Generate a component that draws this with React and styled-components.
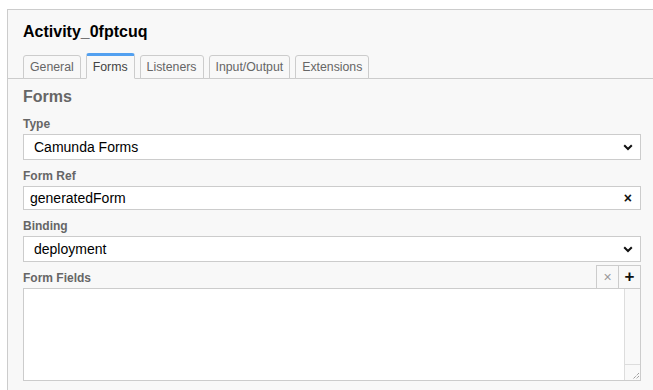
import React from 'react';
import styled, { createGlobalStyle } from 'styled-components';

const Global = createGlobalStyle`
  html, body {
    margin: 0;
    padding: 0;
    background: #fff;
    height: 100%;
  }
  #root {
    height: 100%;
  }
  * {
    box-sizing: border-box;
  }
`;

const Page = styled.div`
  height: 390px;
  padding: 9px 0 0 7px;
  font-family: "Liberation Sans", Arial, Helvetica, sans-serif;
`;

const Panel = styled.div`
  height: 100%;
  background: #f8f8f8;
  border-left: 1px solid #ccc;
  border-top: 1px solid #ccc;
  display: flex;
  flex-flow: column nowrap;
`;

const Header = styled.div`
  padding: 13px 12px 0 15px;
`;

const Title = styled.div`
  font-size: 16px;
  font-weight: 700;
  color: #000;
  line-height: 18px;
`;

const TabBar = styled.div`
  display: flex;
  flex-flow: row nowrap;
  align-items: flex-end;
  gap: 5px;
  margin-top: 14px;
  padding-left: 15px;
  border-bottom: 1px solid #ccc;
  height: 24px;
`;

const Tab = styled.div`
  height: ${props => props.active ? '26px' : '24px'};
  margin-bottom: -1px;
  padding: 0 6px;
  display: flex;
  align-items: center;
  font-size: 12.3px;
  color: ${props => props.active ? '#444' : '#666'};
  background: #f8f8f8;
  border: 1px solid #ccc;
  border-top: ${props => props.active ? '3px solid #52a0f0' : '1px solid #ccc'};
  border-bottom: ${props => props.active ? '1px solid #f8f8f8' : '1px solid #ccc'};
  border-radius: 3px 3px 0 0;
`;

const Content = styled.div`
  padding: 8px 12px 0 15px;
  display: flex;
  flex-flow: column nowrap;
`;

const Heading = styled.div`
  font-size: 16px;
  font-weight: 700;
  color: #666;
  line-height: 19px;
  margin-bottom: 11px;
`;

const Label = styled.div`
  font-size: 12px;
  font-weight: 700;
  color: #666;
  line-height: 14px;
  margin-bottom: ${props => props.inline ? 0 : '3px'};
`;

const Field = styled.div`
  height: ${props => props.h || 26}px;
  background: #fff;
  border: 1px solid #ccc;
  display: flex;
  align-items: center;
  justify-content: space-between;
  padding: 0 7px 0 ${props => props.pl || 10}px;
  font-size: 14px;
  color: #000;
  margin-bottom: ${props => props.mb ?? 9}px;
`;

const Clear = styled.span`
  font-size: 14px;
  font-weight: 700;
  color: #111;
  margin-right: 1px;
`;

const FieldsHeader = styled.div`
  display: flex;
  justify-content: space-between;
  align-items: center;
  height: 23px;
  padding-top: 2px;
`;

const Buttons = styled.div`
  display: flex;
  align-self: flex-end;
`;

const SmallButton = styled.div`
  width: 23px;
  height: 23px;
  border: 1px solid #ccc;
  border-bottom: none;
  margin-left: ${props => props.first ? 0 : '-1px'};
  display: flex;
  align-items: center;
  justify-content: center;
  font-size: ${props => props.plus ? '17px' : '14px'};
  font-weight: ${props => props.plus ? 700 : 400};
  color: ${props => props.plus ? '#111' : '#999'};
  background: #f8f8f8;
`;

const ListBox = styled.div`
  height: 93px;
  background: #fff;
  border: 1px solid #ccc;
  display: flex;
  justify-content: flex-end;
`;

const ScrollTrack = styled.div`
  width: 16px;
  border-left: 1px solid #ddd;
  background: #f9f9f9;
  display: flex;
  flex-flow: column nowrap;
  justify-content: flex-end;
`;

const Grip = styled.div`
  height: 16px;
  border-top: 1px solid #ddd;
  display: flex;
  align-items: flex-end;
  justify-content: flex-end;
`;

const Chevron = () => (
  <svg width="10" height="7" viewBox="0 0 10 7">
    <path d="M1.2 1.2 L5 5 L8.8 1.2" fill="none" stroke="#111" strokeWidth="2" />
  </svg>
);

const GripIcon = () => (
  <svg width="10" height="10" viewBox="0 0 10 10">
    <path d="M9 3 L3 9 M9 6 L6 9" stroke="#777" strokeWidth="1" strokeDasharray="1 1" />
  </svg>
);

export default function App() {
  return (
    <Page>
      <Global />
      <Panel>
        <Header>
          <Title>Activity_0fptcuq</Title>
        </Header>
        <TabBar>
          <Tab>General</Tab>
          <Tab active>Forms</Tab>
          <Tab>Listeners</Tab>
          <Tab>Input/Output</Tab>
          <Tab>Extensions</Tab>
        </TabBar>
        <Content>
          <Heading>Forms</Heading>
          <Label>Type</Label>
          <Field>
            <span>Camunda Forms</span>
            <Chevron />
          </Field>
          <Label>Form Ref</Label>
          <Field h={24} pl={6}>
            <span>generatedForm</span>
            <Clear>×</Clear>
          </Field>
          <Label>Binding</Label>
          <Field mb={3}>
            <span>deployment</span>
            <Chevron />
          </Field>
          <FieldsHeader>
            <Label inline>Form Fields</Label>
            <Buttons>
              <SmallButton first>×</SmallButton>
              <SmallButton plus>+</SmallButton>
            </Buttons>
          </FieldsHeader>
          <ListBox>
            <ScrollTrack>
              <Grip>
                <GripIcon />
              </Grip>
            </ScrollTrack>
          </ListBox>
        </Content>
      </Panel>
    </Page>
  );
}
